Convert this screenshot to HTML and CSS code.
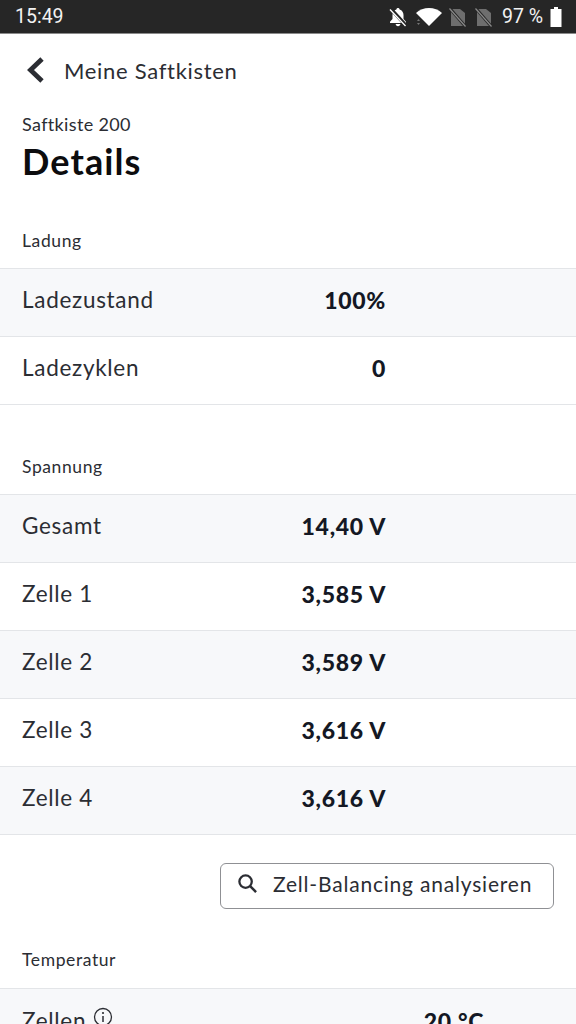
FILE: index.html
```html
<!DOCTYPE html>
<html lang="de">
<head>
<meta charset="utf-8">
<title>Details</title>
<link rel="stylesheet" href="styles.css">
</head>
<body>
<div class="status">
  <span class="time">15:49</span>
  <div class="status-right">
    <svg class="si bell" viewBox="0 0 20 20"><path d="M10 1c-.9 0-1.500.6-1.600 1.400C5.800 3.200 4.500 5.500 4.500 8v4l-2.500 2.800V16h16v-1.200L15.500 12V8c0-2.500-1.300-4.800-3.900-5.600C11.500 1.600 10.900 1 10 1z" fill="#fff"/><path d="M7.700 17h4.600c0 1.300-1 2.200-2.300 2.200S7.700 18.300 7.700 17z" fill="#fff"/><path d="M2.500 1.500l15 16.500" stroke="#262626" stroke-width="3.500"/><path d="M2 2.500l15.500 16.500" stroke="#fff" stroke-width="1.300"/></svg>
    <svg class="si wifi" viewBox="0 0 26 20"><path d="M0 6C3.600 2.800 8.100 1 13 1s9.400 1.800 13 5L13 19z" fill="#fff"/><path d="M1 14l1.500-2 1.500 2zM1 16l1.500 2 1.500-2z" fill="#777"/></svg>
    <svg class="si sim" viewBox="0 0 18 20"><path d="M2 2h9l5 4v13H2z" fill="#6e6e6e"/><path d="M0.500 1l15 17.500" stroke="#262626" stroke-width="3"/><path d="M0.500 1.500l16 18" stroke="#8a8a8a" stroke-width="1.200"/></svg>
    <svg class="si sim" viewBox="0 0 18 20"><path d="M2 2h9l5 4v13H2z" fill="#6e6e6e"/><path d="M0.500 1l15 17.500" stroke="#262626" stroke-width="3"/><path d="M0.500 1.500l16 18" stroke="#8a8a8a" stroke-width="1.200"/></svg>
    <span class="pct">97 %</span>
    <svg class="si batt" viewBox="0 0 12 20"><path d="M4 0h4v2h3.500v18H.5V2H4z" fill="#fff"/></svg>
  </div>
</div>

<div class="nav">
  <svg class="back" viewBox="0 0 20 28"><path d="M16.500 3L5 14l11.500 11" fill="none" stroke="#2b2d33" stroke-width="4.800"/></svg>
  <span class="nav-title">Meine Saftkisten</span>
</div>

<div class="head">
  <div class="sub">Saftkiste 200</div>
  <h1 class="title">Details</h1>
</div>

<div class="section-label first">Ladung</div>
<div class="rows">
  <div class="row"><span>Ladezustand</span><b>100%</b></div>
  <div class="row"><span>Ladezyklen</span><b>0</b></div>
</div>

<div class="section-label">Spannung</div>
<div class="rows">
  <div class="row"><span>Gesamt</span><b>14,40 V</b></div>
  <div class="row"><span>Zelle 1</span><b>3,585 V</b></div>
  <div class="row"><span>Zelle 2</span><b>3,589 V</b></div>
  <div class="row"><span>Zelle 3</span><b>3,616 V</b></div>
  <div class="row"><span>Zelle 4</span><b>3,616 V</b></div>
</div>

<div class="actions">
  <button class="btn" type="button">
    <svg class="search" viewBox="0 0 22 22"><circle cx="9" cy="9" r="6.500" fill="none" stroke="#2b2d33" stroke-width="2.400"/><path d="M13.800 13.800L20 20" stroke="#2b2d33" stroke-width="2.600"/></svg>
    <span>Zell-Balancing analysieren</span>
  </button>
</div>

<div class="section-label temp">Temperatur</div>
<div class="rows">
  <div class="row wide"><span class="with-info">Zellen
    <svg class="info" viewBox="0 0 20 20"><circle cx="10" cy="10" r="8.500" fill="none" stroke="#2b2d33" stroke-width="1.300"/><circle cx="10" cy="6" r="1.100" fill="#2b2d33"/><path d="M10 9v6" stroke="#2b2d33" stroke-width="1.500"/></svg></span><b>20 °C</b></div>
</div>
</body>
</html>
```

FILE: styles.css
```css
* { box-sizing: border-box; }
html, body { margin: 0; padding: 0; }
body {
  width: 576px;
  height: 1024px;
  overflow: hidden;
  background: #fff;
  color: #2b2d33;
  font-family: Lato, "Noto Sans", sans-serif;
}
.status {
  height: 34px;
  background: #262626;
  border-bottom: 1px solid #8a8a8a;
  display: flex;
  align-items: center;
  justify-content: space-between;
  padding: 0 14px 0 15px;
  color: #f2f2f2;
  font-family: Roboto, sans-serif;
  font-size: 19.500px;
}
.status-right { display: flex; align-items: center; }
.si { display: block; height: 20px; }
.bell { width: 20px; margin-right: 8px; }
.wifi { width: 26px; margin-right: 7px; }
.sim { width: 18px; margin-right: 8px; }
.pct { margin: 0 7px 0 1px; letter-spacing: 0; }
.batt { width: 12px; }
.nav {
  height: 72px;
  display: flex;
  align-items: center;
  padding: 0 0 0 25px;
  gap: 18px;
}
.back { width: 21px; height: 28px; display: block; }
.nav-title { font-size: 22px; letter-spacing: .7px; }
.head { padding: 0 22px; }
.sub { font-size: 18px; line-height: 22px; margin-top: 7px; letter-spacing: .35px; }
.title { margin: 4px 0 0; font-size: 36px; line-height: 44px; font-weight: 700; color: #0c0c0e; letter-spacing: 1.100px; }
.section-label {
  font-size: 17.500px;
  line-height: 22px;
  padding: 0 22px;
  margin-top: 51px;
  margin-bottom: 16px;
  letter-spacing: .6px;
}
.section-label.first { margin-top: 47px; }
.section-label.temp { margin-top: 40px; margin-bottom: 17px; }
.rows { border-top: 1px solid #e3e5e8; }
.row {
  height: 68px;
  display: flex;
  align-items: center;
  justify-content: space-between;
  padding: 0 190px 6px 22px;
  border-bottom: 1px solid #e3e5e8;
  font-size: 22.500px;
  letter-spacing: .7px;
}
.row:nth-child(odd) { background: #f7f8fa; }
.row.wide { padding-right: 92px; padding-bottom: 4px; }
.row b { font-weight: 900; color: #141824; font-size: 23px; letter-spacing: .7px; }
.actions { display: flex; justify-content: flex-end; padding: 28px 22px 0 0; }
.btn {
  width: 334px;
  height: 46px;
  display: flex;
  align-items: center;
  gap: 15px;
  padding: 0 0 5px 16px;
  background: #fff;
  border: 1px solid #8f9094;
  border-radius: 6px;
  font: inherit;
  font-size: 21px;
  letter-spacing: .8px;
  color: #2b2d33;
}
.search { width: 21px; height: 21px; display: block; }
.with-info { display: flex; align-items: flex-start; gap: 7px; }
.info { width: 20px; height: 20px; margin-top: 0; }
```
